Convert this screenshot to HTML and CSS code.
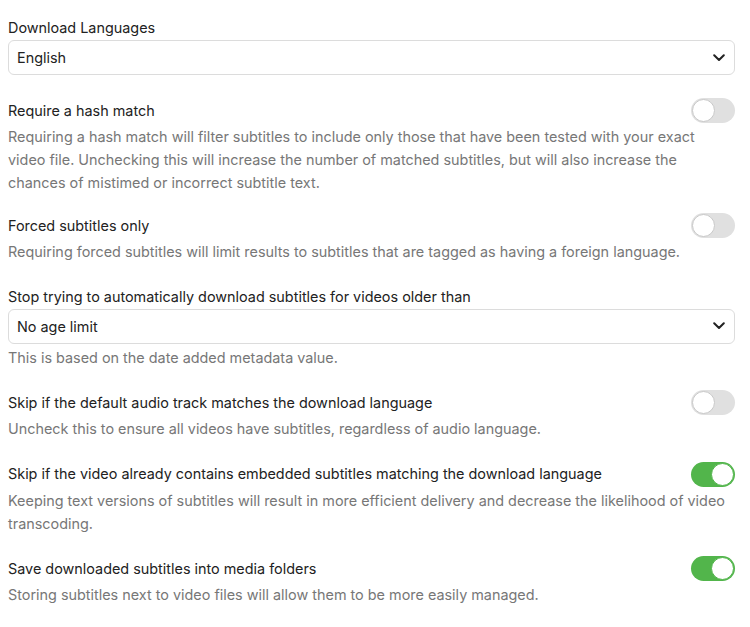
FILE: index.html
```html
<!DOCTYPE html>
<html>
<head>
<meta charset="utf-8">
<link rel="stylesheet" href="styles.css">
</head>
<body>
<div class="page">
  <div class="field select-field first">
    <div class="label">Download Languages</div>
    <div class="select"><span>English</span>
      <svg class="chev" width="12" height="8" viewBox="0 0 12 8"><path d="M1.2 1.2 L6 6 L10.8 1.2" fill="none" stroke="#222" stroke-width="2" stroke-linecap="round" stroke-linejoin="round"/></svg>
    </div>
  </div>

  <div class="field toggle-field tight">
    <div class="row"><div class="label">Require a hash match</div><span class="toggle"></span></div>
    <div class="desc">Requiring a hash match will filter subtitles to include only those that have been tested with your exact video file. Unchecking this will increase the number of matched subtitles, but will also increase the chances of mistimed or incorrect subtitle text.</div>
  </div>

  <div class="field toggle-field">
    <div class="row"><div class="label">Forced subtitles only</div><span class="toggle"></span></div>
    <div class="desc">Requiring forced subtitles will limit results to subtitles that are tagged as having a foreign language.</div>
  </div>

  <div class="field select-field">
    <div class="label">Stop trying to automatically download subtitles for videos older than</div>
    <div class="select"><span>No age limit</span>
      <svg class="chev" width="12" height="8" viewBox="0 0 12 8"><path d="M1.2 1.2 L6 6 L10.8 1.2" fill="none" stroke="#222" stroke-width="2" stroke-linecap="round" stroke-linejoin="round"/></svg>
    </div>
    <div class="desc">This is based on the date added metadata value.</div>
  </div>

  <div class="field toggle-field">
    <div class="row"><div class="label">Skip if the default audio track matches the download language</div><span class="toggle"></span></div>
    <div class="desc">Uncheck this to ensure all videos have subtitles, regardless of audio language.</div>
  </div>

  <div class="field toggle-field">
    <div class="row"><div class="label">Skip if the video already contains embedded subtitles matching the download language</div><span class="toggle on"></span></div>
    <div class="desc">Keeping text versions of subtitles will result in more efficient delivery and decrease the likelihood of video transcoding.</div>
  </div>

  <div class="field toggle-field">
    <div class="row"><div class="label">Save downloaded subtitles into media folders</div><span class="toggle on"></span></div>
    <div class="desc">Storing subtitles next to video files will allow them to be more easily managed.</div>
  </div>
</div>
</body>
</html>
```
FILE: styles.css
```css
html, body {
  margin: 0;
  padding: 0;
  background: #fff;
}
body {
  font-family: Inter, "Noto Sans", sans-serif;
  font-size: 14.4px;
  color: #222;
}
.page {
  padding: 16px 15px 0 8px;
  display: flex;
  flex-direction: column;
  gap: 23px;
}
.field {
  margin-bottom: -1.5px;
}
.field.first {
  margin-bottom: 0;
}
.field.tight {
  margin-bottom: -4px;
}
.label {
  line-height: 24px;
  color: #222;
}
.row {
  display: flex;
  align-items: center;
  justify-content: space-between;
}
.desc {
  color: #777;
  line-height: 23px;
  margin-top: 2px;
}
.select {
  height: 35px;
  box-sizing: border-box;
  border: 1px solid #dcdcdc;
  border-radius: 6px;
  display: flex;
  align-items: center;
  justify-content: space-between;
  padding: 0 9px 0 8px;
  color: #222;
}
.toggle {
  position: relative;
  flex: none;
  width: 44px;
  height: 25px;
  border-radius: 13px;
  background: #e0e0e0;
  box-sizing: border-box;
}
.toggle::after {
  content: "";
  position: absolute;
  top: 1px;
  left: 1px;
  width: 23px;
  height: 23px;
  box-sizing: border-box;
  border-radius: 50%;
  background: #fff;
  border: 1px solid #c8c8c8;
}
.toggle.on {
  background: #52b54b;
}
.toggle.on::after {
  left: 20px;
  border: 1px solid #52b54b;
}
```
